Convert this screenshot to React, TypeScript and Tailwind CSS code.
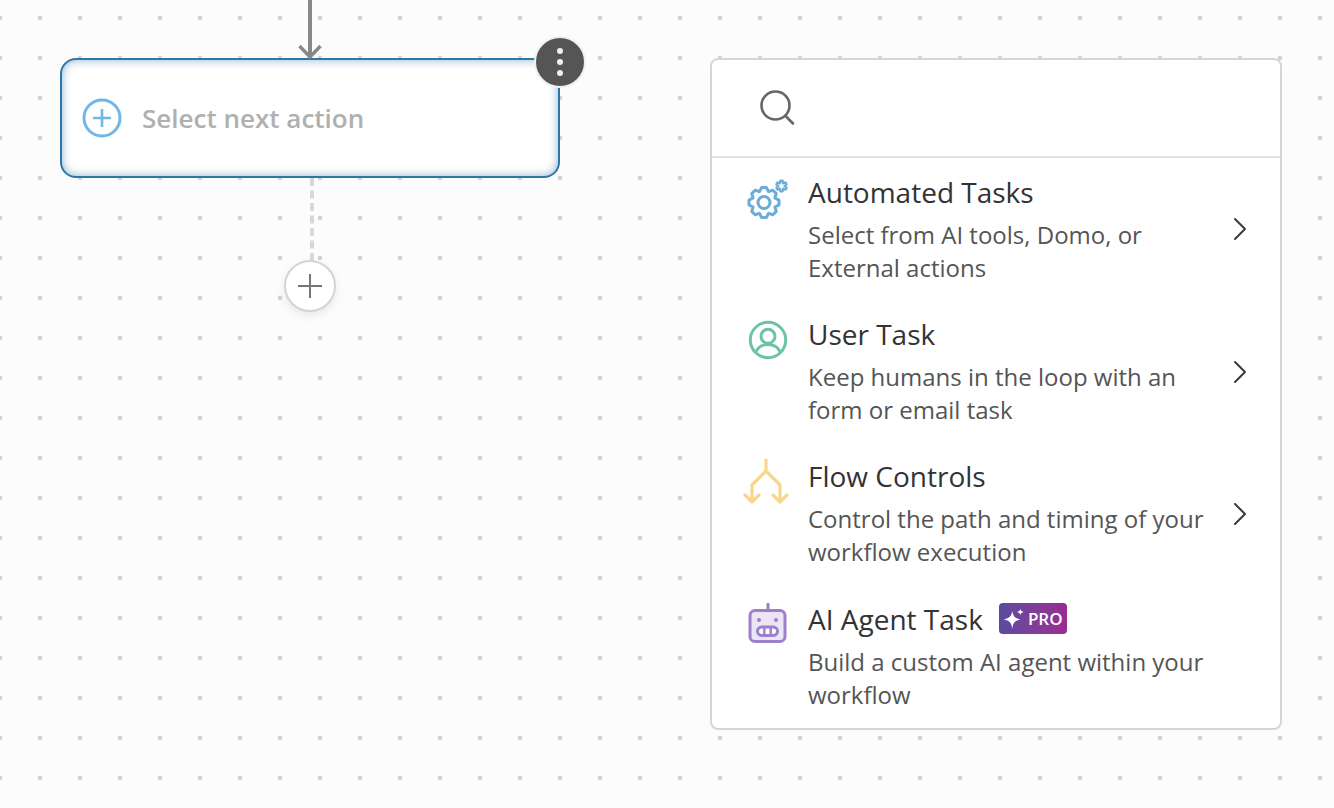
import React from "react";

const gearPath = (cx: number, cy: number, teeth: number, outer: number, inner: number) => {
  const pts: string[] = [];
  const step = (Math.PI * 2) / teeth;
  for (let i = 0; i < teeth; i++) {
    const a = i * step - Math.PI / 2;
    const list: [number, number][] = [
      [inner, a - step * 0.5],
      [outer, a - step * 0.2],
      [outer, a + step * 0.2],
    ];
    list.forEach(([r, t]) => {
      pts.push(`${(cx + r * Math.cos(t)).toFixed(2)} ${(cy + r * Math.sin(t)).toFixed(2)}`);
    });
  }
  return "M" + pts.join(" L") + " Z";
};

const Chevron = () => (
  <svg width="16" height="24" viewBox="0 0 16 24" fill="none" stroke="#3b3b3b" strokeWidth="2" strokeLinecap="round" strokeLinejoin="round" className="shrink-0">
    <path d="M3 2 L13 12 L3 22" />
  </svg>
);

const GearIcon = () => (
  <svg width="46" height="46" viewBox="0 0 46 46" fill="none" stroke="#6cadd8" strokeWidth="3" strokeLinejoin="round">
    <path d={gearPath(18, 24.5, 8, 15.2, 11.8)} />
    <circle cx="18" cy="24.5" r="6" />
    <path d={gearPath(35.5, 8, 6, 5.4, 3)} strokeWidth="2.2" fill="#ffffff" />
  </svg>
);

const UserIcon = () => (
  <svg width="40" height="40" viewBox="0 0 40 40" fill="none" stroke="#6cc3aa" strokeWidth="3">
    <circle cx="20" cy="20" r="17.7" />
    <circle cx="20" cy="16.3" r="7" />
    <path d="M8 31.5 C10.5 26.5 15 24.5 20 24.5 C25 24.5 29.5 26.5 32 31.5" />
  </svg>
);

const FlowIcon = () => (
  <svg width="48" height="48" viewBox="0 0 48 48" fill="none" stroke="#f8d78d" strokeWidth="3.2" strokeLinecap="round" strokeLinejoin="round">
    <path d="M23 2 V13 L9 27 V44 M23 13 L37 27 V44 M2 37 L9 44 L16 37 M30 37 L37 44 L44 37" />
  </svg>
);

const BotIcon = () => (
  <svg width="40" height="40" viewBox="0 0 40 40" fill="none" stroke="#9d7fcc" strokeWidth="3">
    <path d="M20 1 V7" strokeLinecap="round" />
    <rect x="2" y="7.5" width="35" height="31" rx="5" fill="#ece5f6" />
    <circle cx="11" cy="17" r="2" fill="#9d7fcc" stroke="none" />
    <circle cx="28" cy="17" r="2" fill="#9d7fcc" stroke="none" />
    <rect x="9.5" y="24" width="20" height="8.5" rx="4.2" fill="#fff" />
    <path d="M16.3 24 V32.5 M22.7 24 V32.5" strokeWidth="2.4" />
  </svg>
);

const rows = [
  { icon: <GearIcon />, box: "pl-[34px] pt-[20px]", title: "Automated Tasks", a: "Select from AI tools, Domo, or", b: "External actions", chevron: true, pro: false },
  { icon: <UserIcon />, box: "pl-[36px] pt-[20px]", title: "User Task", a: "Keep humans in the loop with an", b: "form or email task", chevron: true, pro: false },
  { icon: <FlowIcon />, box: "pl-[31px] pt-[15px]", title: "Flow Controls", a: "Control the path and timing of your", b: "workflow execution", chevron: true, pro: false },
  { icon: <BotIcon />, box: "pl-[36px] pt-[18px]", title: "AI Agent Task", a: "Build a custom AI agent within your", b: "workflow", chevron: false, pro: true },
];

export default function App() {
  return (
    <div
      className="flex items-start w-[1334px] h-[808px] overflow-hidden bg-[#fcfcfc] bg-[radial-gradient(circle_at_center,#d2d2d2_2px,transparent_2.6px)] bg-[length:40px_40px] bg-[position:-20px_-2px] pl-[60px] font-['Open_Sans','Noto_Sans',sans-serif]"
    >
      <div className="w-[500px] shrink-0 flex flex-col items-center">
        <svg width="28" height="60" viewBox="0 0 28 60" fill="none" stroke="#888888" strokeWidth="4" className="-mb-[2px] relative z-10 block">
          <path d="M14 0 V58" />
          <path d="M3.5 46 L14 57 L24.5 46" strokeWidth="3.4" />
        </svg>
        <div className="relative w-[500px] h-[120px] bg-white border-2 border-[#2d76a8] rounded-[16px] shadow-[inset_0_0_10px_rgba(45,118,168,0.55)] flex items-center pl-[20px] gap-[20px]">
          <svg width="40" height="40" viewBox="0 0 40 40" fill="none" stroke="#6fb7e6" strokeWidth="3">
            <circle cx="20" cy="20" r="18" />
            <path d="M20 11 V29 M11 20 H29" strokeWidth="2.6" />
          </svg>
          <span className="text-[26px] leading-none font-semibold text-[#b0b0b0]">Select next action</span>
          <div className="absolute -top-[24px] -right-[28px] w-[52px] h-[52px] rounded-full bg-[#555555] border-2 border-[#f0f0f0] flex flex-col items-center justify-center gap-[5px]">
            <span className="w-[6px] h-[6px] rounded-full bg-[#f0f0f0]" />
            <span className="w-[6px] h-[6px] rounded-full bg-[#f0f0f0]" />
            <span className="w-[6px] h-[6px] rounded-full bg-[#f0f0f0]" />
          </div>
        </div>
        <div className="h-[83px] w-[4px] ml-[4px] border-l-4 border-dashed border-[#d8d8d8]" />
        <div className="-mt-[1px] w-[52px] h-[52px] rounded-full bg-white border-2 border-[#d4d4d4] shadow-[0_4px_10px_rgba(0,0,0,0.08)] flex items-center justify-center relative">
          <svg width="26" height="26" viewBox="0 0 26 26" fill="none" stroke="#777777" strokeWidth="2">
            <path d="M13 1 V25 M1 13 H25" />
          </svg>
        </div>
      </div>
      <div className="ml-[150px] mt-[58px] w-[572px] h-[672px] bg-white border-2 border-[#d6d6d6] rounded-[8px] flex flex-col">
        <div className="h-[98px] border-b-2 border-[#e2e2e2] flex items-center pl-[47px] shrink-0">
          <svg width="36" height="36" viewBox="0 0 36 36" fill="none" stroke="#666666" strokeWidth="2.6">
            <circle cx="16.5" cy="15.5" r="14" />
            <path d="M26.5 26 L34 33.5" strokeLinecap="round" />
          </svg>
        </div>
        <div className="flex flex-col">
          {rows.map((r) => (
            <div key={r.title} className="h-[142.4px] flex items-center pr-[32px]">
              <div className={`w-[96px] shrink-0 self-start ${r.box}`}>{r.icon}</div>
              <div className="flex-1 min-w-0 pb-[2px]">
                <div className="flex items-center gap-[16px] h-[38px] text-[28px] text-[#333333] leading-[38px]">
                  {r.title}
                  {r.pro && (
                    <span className="inline-flex items-center gap-[3px] h-[31px] w-[68px] pl-[4px] rounded-[4px] bg-gradient-to-r from-[#5a4a9f] to-[#9b2a90] text-white text-[17px] font-semibold leading-none">
                      <svg width="22" height="23" viewBox="0 0 19 20" fill="#ffffff">
                        <path d="M8 3.5 C8.8 8 10.2 9.8 15 10.8 C10.2 11.8 8.8 13.5 8 19 C7.2 13.5 5.8 11.8 0.5 10.8 C5.8 9.8 7.2 8 8 3.5 Z" />
                        <path d="M15 1.5 C15.3 3.2 15.8 3.7 18 4.3 C15.8 4.9 15.3 5.4 15 7.1 C14.7 5.4 14.2 4.9 12 4.3 C14.2 3.7 14.7 3.2 15 1.5 Z" />
                      </svg>
                      PRO
                    </span>
                  )}
                </div>
                <div className="mt-[7px] text-[24px] leading-[33px] text-[#555555]">
                  <div>{r.a}</div>
                  <div>{r.b}</div>
                </div>
              </div>
              {r.chevron && <Chevron />}
            </div>
          ))}
        </div>
      </div>
    </div>
  );
}
